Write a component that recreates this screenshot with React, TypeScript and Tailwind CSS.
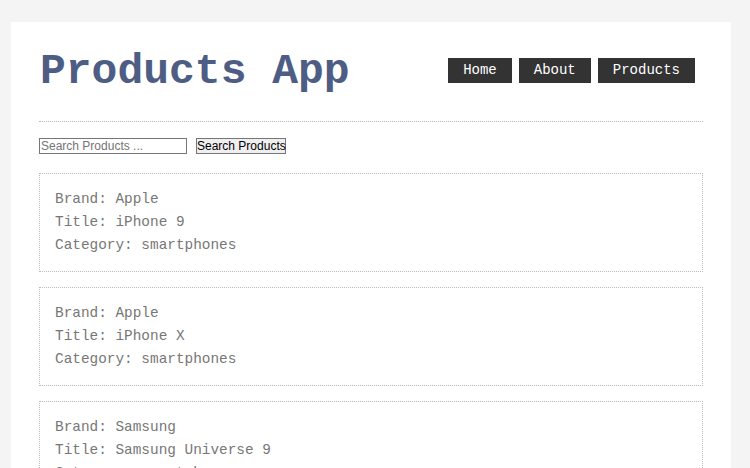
const products = [
  { brand: "Apple", title: "iPhone 9", category: "smartphones" },
  { brand: "Apple", title: "iPhone X", category: "smartphones" },
  { brand: "Samsung", title: "Samsung Universe 9", category: "smartphones" },
];

const navLinks = ["Home", "About", "Products"];

export default function App() {
  return (
    <div className="min-h-screen bg-[#f4f4f4] pt-[22px] pl-[11px] font-['Liberation_Mono',monospace]">
      <div className="w-[720px] bg-white px-[28px] pt-[23px] pb-[20px]">
        <header className="flex items-center justify-between">
          <h1 className="pl-[1px] text-[43px] font-bold leading-[54px] text-[#4e5d84]">
            Products App
          </h1>
          <nav className="mr-[8px] mb-[4px] flex gap-[7px]">
            {navLinks.map((link) => (
              <a
                key={link}
                href="#"
                className="flex h-[25px] items-center bg-[#333] px-[15px] text-[14px] text-white"
              >
                {link}
              </a>
            ))}
          </nav>
        </header>

        <hr className="mt-[22px] border-0 border-t border-dotted border-[#bbb]" />

        <form className="mt-[16px] flex gap-[9px] font-['Liberation_Sans',sans-serif] text-[12px]">
          <input
            type="text"
            placeholder="Search Products ..."
            className="h-[16px] w-[148px] border border-[#767676] px-[1px] leading-[14px] placeholder:text-[#757575]"
          />
          <button
            type="button"
            className="h-[16px] w-[90px] whitespace-nowrap border border-[#767676] bg-[#efefef] leading-[14px] text-black"
          >
            Search Products
          </button>
        </form>

        <div className="mt-[19px] flex flex-col gap-[15px]">
          {products.map((p, i) => (
            <div
              key={i}
              className="border border-dotted border-[#bbb] py-[14px] pl-[15px] text-[14.4px] leading-[23px] text-[#777]"
            >
              <p>Brand: {p.brand}</p>
              <p>Title: {p.title}</p>
              <p>Category: {p.category}</p>
            </div>
          ))}
        </div>
      </div>
    </div>
  );
}
